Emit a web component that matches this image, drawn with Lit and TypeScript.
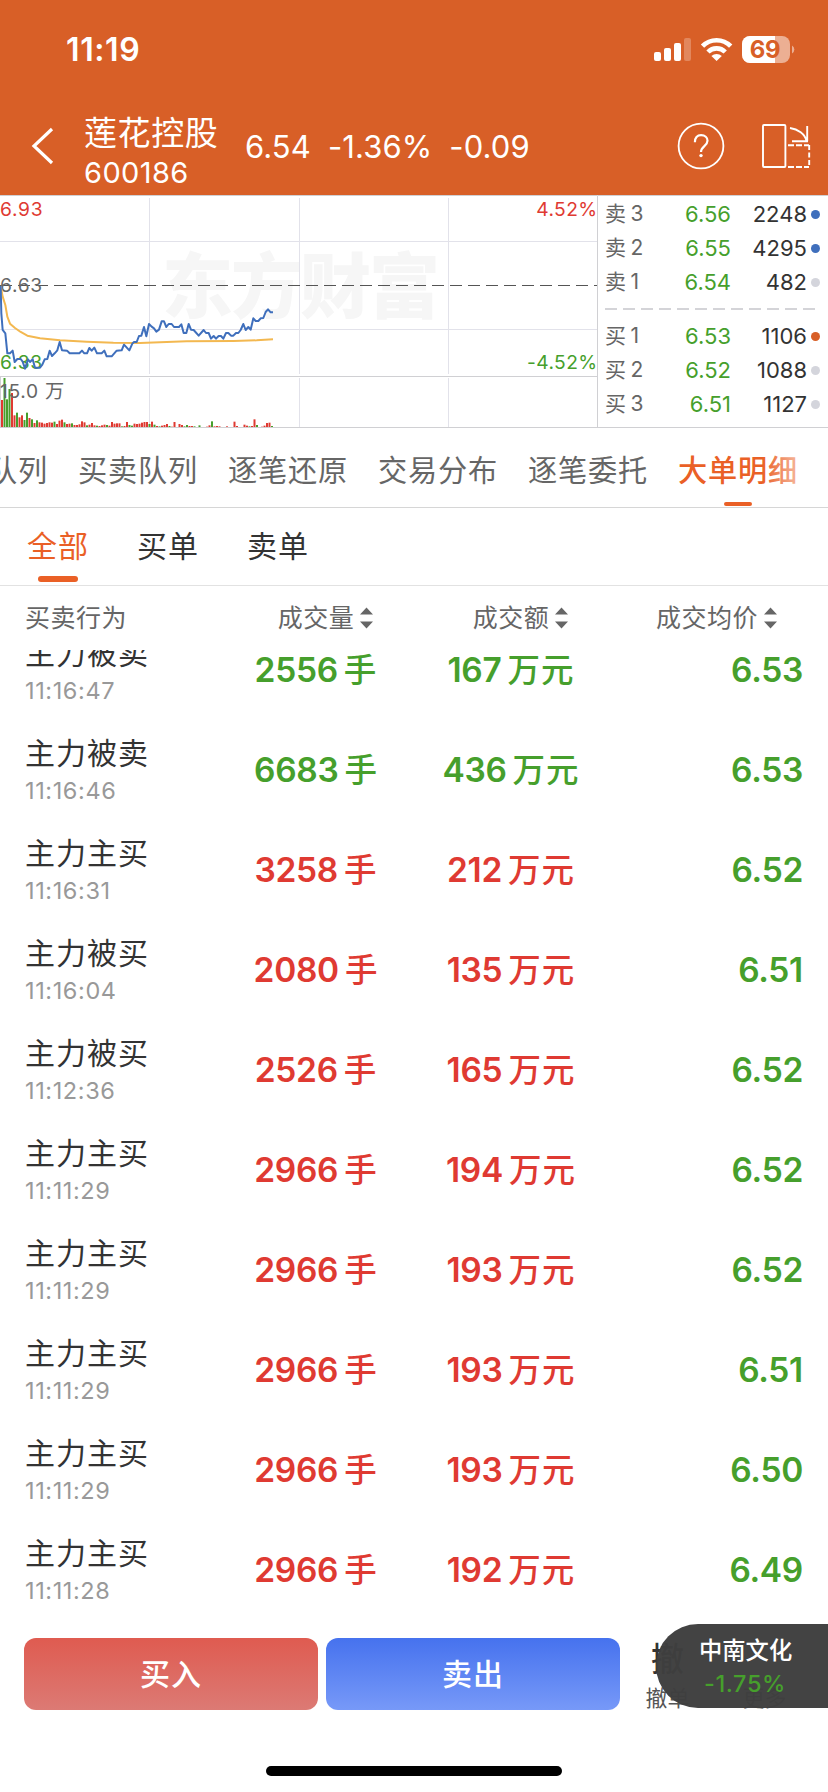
import { LitElement, html, svg, css } from "lit";
import { customElement } from "lit/decorators.js";
import { classMap } from "lit/directives/class-map.js";

const PRICE =
  "2,288 4,370 8,420 16,430 22,490 30,490 38,482 44,516 52,507 62,507 68,515 75,536 84,508 90,516 98,508 105,533 120,533 127,524 134,508 142,507 149,482 156,498 164,490 172,481 179,456 186,481 201,482 209,490 238,490 246,482 253,490 261,490 268,474 275,482 283,473 291,490 305,490 313,482 320,499 335,499 350,482 365,481 372,464 388,481 397,461 402,456 410,456 417,438 424,437 432,411 439,439 447,402 455,410 462,415 469,425 477,419 485,394 492,394 499,411 506,402 515,402 522,411 537,411 544,403 551,429 559,429 566,402 573,419 581,420 596,437 611,420 618,429 626,429 633,446 641,438 648,446 656,438 663,438 670,446 678,429 685,429 693,437 700,437 708,429 715,429 722,420 730,402 737,420 745,411 752,419 760,385 767,393 775,393 782,385 790,384 797,366 804,358 812,367 819,367";
const AVERAGE =
  "M2,288 L8,320 L16,345 L22,380 L30,401 L45,414 L62,426 L82,437 L120,445 L180,451 L260,455 L340,458 L420,459 L480,457 L560,454 L700,453 L770,451 L819,448";

/* Volume bars: height, prefixed by its direction (r = up, g = down). */
const VOLUME =
  "r81 g147 g83 g114 r102 r35 g43 r29 r35 g21 g43 r27 g23 r12 g20 r14 r13 r10 r12 r14 r13 g16 r9 r19 r22 g14 r9 r10 g11 r6 r6 r8 r17 r14 g5 r7 r12 r5 g4 r3 r5 r7 g6 r4 r15 r10 r11 r11 g2 r3 r15 g6 g4 r10 r9 r10 r13 r15 r15 g9 r16 g7 r3 g2 r4 r6 r9 g3 r1 r15 g0 r9 r6 g2 g6 r3 r3 g2 r0 g5 g0 r0 r1 r5 g17 r2 r3 r2 r0 r0 r2 r0 r0 r16 r3 g0 r0 r7 r4 g2 r3 r23 g6 r0 r1 r4 r12 r13 g3".split(" ");

type Quote = [string, string, string, string];
const ASKS: Quote[] = [
  ["卖 3", "6.56", "2248", "blue"],
  ["卖 2", "6.55", "4295", "blue"],
  ["卖 1", "6.54", "482", "grey"],
];
const BIDS: Quote[] = [
  ["买 1", "6.53", "1106", "orange"],
  ["买 2", "6.52", "1088", "grey"],
  ["买 3", "6.51", "1127", "grey"],
];

const TRADES: [string, string, string, string, string, boolean][] = [
  ["主力被卖", "11:16:47", "2556", "167", "6.53", false],
  ["主力被卖", "11:16:46", "6683", "436", "6.53", false],
  ["主力主买", "11:16:31", "3258", "212", "6.52", true],
  ["主力被买", "11:16:04", "2080", "135", "6.51", true],
  ["主力被买", "11:12:36", "2526", "165", "6.52", true],
  ["主力主买", "11:11:29", "2966", "194", "6.52", true],
  ["主力主买", "11:11:29", "2966", "193", "6.52", true],
  ["主力主买", "11:11:29", "2966", "193", "6.51", true],
  ["主力主买", "11:11:29", "2966", "193", "6.50", true],
  ["主力主买", "11:11:28", "2966", "192", "6.49", true],
];

const base = css`
  * { box-sizing: border-box; }
  :host { display: block; font-family: Inter, "Noto Sans CJK SC", sans-serif; white-space: nowrap; }
  svg { display: block; }
`;

@customElement("stock-header")
export class StockHeader extends LitElement {
  static styles = [base, css`
    :host { background: #d85f27; color: #fff; height: 195px; }
    .status { height: 100px; display: flex; justify-content: space-between; align-items: center; padding: 0 32px 0 66px; }
    .clock { font-size: 32px; font-weight: 600; line-height: 40px; letter-spacing: 0.6px; }
    .nav { height: 95px; display: flex; align-items: center; padding: 0 17px 3px 30px; }
    .back { margin-right: 29px; }
    .title { width: 161px; }
    .name { font-size: 33px; line-height: 38px; letter-spacing: 0.6px; margin-top: 14px; }
    .code { font-size: 29px; line-height: 41px; letter-spacing: 0.4px; }
    .quote { display: flex; gap: 17px; font-size: 31px; letter-spacing: 0.1px; flex: 1; }
    .help { margin-right: 36px; }
  `];
  render() {
    return html`
      <div class="status">
        <span class="clock">11:19</span>
        <svg width="143" height="30" viewBox="652 35 143 30">
          <g fill="#fff">
            <rect x="653" y="52" width="7" height="9" rx="2" />
            <rect x="663" y="48" width="7" height="13" rx="2" />
            <rect x="673" y="43" width="7" height="18" rx="2" />
            <rect x="683" y="38" width="7" height="23" rx="2" opacity=".25" />
          </g>
          <g fill="none" stroke="#fff" stroke-width="4.6">
            <path d="M701.5 46.2 A19.6 19.6 0 0 1 729.7 46.2" />
            <path d="M707 52 A12 12 0 0 1 724.2 52" />
          </g>
          <path d="M715.6 61 L710.4 56 A7.5 7.5 0 0 1 720.8 56 Z" fill="#fff" />
          <rect x="741" y="36" width="48" height="27" rx="8" fill="#fff" opacity=".5" />
          <path d="M749 36 H774 V63 H749 A8 8 0 0 1 741 55 V44 A8 8 0 0 1 749 36Z" fill="#fff" />
          <path d="M791 45.5 A4.6 4.6 0 0 1 791 53.5Z" fill="#fff" opacity=".5" />
          <text x="764" y="58" text-anchor="middle" font-size="24" font-weight="700" letter-spacing="-.4" fill="#d85f27">69</text>
        </svg>
      </div>
      <div class="nav">
        <svg class="back" width="25" height="40" viewBox="30 126 25 40"><path d="M52 129 L34 146 L52 163" fill="none" stroke="#fff" stroke-width="3.2" /></svg>
        <div class="title"><div class="name">莲花控股</div><div class="code">600186</div></div>
        <div class="quote"><span>6.54</span><span>-1.36%</span><span>-0.09</span></div>
        <svg class="help" width="48" height="48" viewBox="678 122 48 48">
          <circle cx="702" cy="146" r="22.4" fill="none" stroke="#fff" stroke-width="1.8" />
          <path d="M695.9 142.2 C695.7 137.6 698.3 135.1 702.1 135.1 C706 135.1 708.5 137.5 708.5 140.7 C708.5 146 702 146.2 702 152" fill="none" stroke="#fff" stroke-width="2.2" />
          <circle cx="702" cy="155.6" r="1.7" fill="#fff" />
        </svg>
        <svg width="50" height="46" viewBox="761 123 50 46">
          <g fill="none" stroke="#fff" stroke-width="1.9">
            <rect x="763" y="125" width="22.4" height="42" rx="1" />
            <path d="M788 145.2 H809" stroke-dasharray="6 2" />
            <path d="M788 167 H809" stroke-dasharray="6 2" />
            <path d="M809.2 145 V167" stroke-dasharray="5 2.5" />
            <path d="M790 128 C798 129 805 134 806.5 141 M807.2 126 V141.2 M792 141.2 H808" />
          </g>
        </svg>
      </div>
    `;
  }
}

@customElement("price-chart")
export class PriceChart extends LitElement {
  static styles = [base, css`
    .label { font-size: 19.2px; letter-spacing: 0.7px; }
    .up { fill: #df3a32; }
    .down { fill: #469f2c; }
    .flat { fill: #666; }
    .mark { font-family: "Noto Sans CJK SC", sans-serif; font-weight: 900; font-size: 71px; fill: #f6f6f6; }
    .grid { stroke: #e2e2ea; stroke-width: 1; fill: none; }
    .edge { stroke: #d0d0d3; stroke-width: 1; fill: none; }
    .end { text-anchor: end; letter-spacing: 0.4px; }
  `];
  render() {
    return html`
      <svg width="598" height="233" viewBox="0 195 598 233">
        <text class="mark" x="162" y="312" textLength="278">东方财富</text>
        <path class="grid" d="M0 241.5H597M0 329.5H597M149.5 198V374M299.5 198V374M448.5 198V374M149.5 378V427M299.5 378V427M448.5 378V427" />
        <path class="edge" d="M0 195.5H597.5V427M0 376.5H597M.5 377V427M0 427.5H598" />
        <path d="M0 285.5H597" stroke="#555" stroke-width="1.1" stroke-dasharray="12 6" />
        <g transform="translate(0 190) scale(.33333)">
          ${VOLUME.map((v, i) => svg`<rect class=${v[0] === "r" ? "up" : "down"} x=${3 + i * 7.5} y=${711 - +v.slice(1)} width="6" height=${+v.slice(1)} />`)}
        </g>
        <text class="label up" x="0" y="216">6.93</text>
        <text class="label flat" x="0" y="292">6.63</text>
        <text class="label down" x="0" y="369">6.33</text>
        <text class="label up end" x="597.5" y="216">4.52%</text>
        <text class="label down end" x="597.5" y="369">-4.52%</text>
        <text class="label flat" x="0" y="398">15.0 万</text>
        <g transform="translate(0 190) scale(.33333)" fill="none" stroke-linejoin="round">
          <path d=${AVERAGE} stroke="#f3b850" stroke-width="6" />
          <polyline points=${PRICE} stroke="#3f6fbc" stroke-width="6" />
        </g>
      </svg>
    `;
  }
}

@customElement("order-book")
export class OrderBook extends LitElement {
  static styles = [base, css`
    :host { flex: 1; height: 233px; padding: 1px 7px 0 7px; border-top: 1px solid #d0d0d3; border-bottom: 1px solid #d0d0d3; }
    .row { display: grid; grid-template-columns: 45px 81px 76px 13px; height: 34px; line-height: 34px; font-size: 22px; color: #333; }
    .side { color: #666; font-size: 21px; word-spacing: -1.5px; }
    .price { color: #469f2c; text-align: right; }
    .size { text-align: right; }
    .dot { width: 9px; height: 9px; border-radius: 50%; align-self: center; justify-self: end; background: #d4d5dc; }
    .blue { background: #3f6fbc; }
    .orange { background: #d85f27; }
    .gap { height: 20px; display: flex; align-items: center; }
  `];
  private row([side, price, size, tone]: Quote) {
    return html`<div class="row"><span class="side">${side}</span><span class="price">${price}</span><span class="size">${size}</span><i class="dot ${tone}"></i></div>`;
  }
  render() {
    return html`
      ${ASKS.map((q) => this.row(q))}
      <div class="gap"><svg width="211" height="2"><path d="M0 1H211" stroke="#d4d4d8" stroke-width="2" stroke-dasharray="12 6" /></svg></div>
      ${BIDS.map((q) => this.row(q))}
    `;
  }
}

@customElement("view-tabs")
export class ViewTabs extends LitElement {
  static styles = [base, css`
    .tabs { position: relative; height: 80px; border-bottom: 1px solid #d6d6d6; overflow: hidden; display: flex; color: #666; font-size: 29.2px; letter-spacing: 0.8px; }
    .track { display: flex; margin-left: -87px; }
    .tab { width: 150px; flex: none; text-align: center; line-height: 85px; display: flex; flex-direction: column; align-items: center; }
    .on { color: #ea6026; font-weight: 500; }
    .bar { width: 28px; height: 4px; border-radius: 2px; background: #ea6026; margin-top: -11px; }
    .fade { position: absolute; right: 0; top: 0; width: 66px; height: 74px; background: linear-gradient(90deg, rgba(255,255,255,0), rgba(255,255,255,.9) 90%, #fff); }
    .filters { height: 78px; border-bottom: 1px solid #e2e2e2; display: flex; gap: 48px; padding-left: 27px; font-size: 30px; letter-spacing: 1px; color: #333; }
    .filter { line-height: 76px; display: flex; flex-direction: column; align-items: center; }
    .chosen { color: #ea6026; }
    .under { width: 40px; height: 6px; border-radius: 3px; background: #ea6026; margin-top: -8px; }
  `];
  render() {
    const tabs = ["买卖队列", "买卖队列", "逐笔还原", "交易分布", "逐笔委托", "大单明细"];
    return html`
      <div class="tabs">
        <div class="track">${tabs.map((t, i) => html`<div class=${classMap({ tab: true, on: i === 5 })}>${t}${i === 5 ? html`<i class="bar"></i>` : ""}</div>`)}</div>
        <div class="fade"></div>
      </div>
      <div class="filters">
        ${["全部", "买单", "卖单"].map((t, i) => html`<div class=${classMap({ filter: true, chosen: i === 0 })}>${t}${i === 0 ? html`<i class="under"></i>` : ""}</div>`)}
      </div>
    `;
  }
}

@customElement("trade-list")
export class TradeList extends LitElement {
  static styles = [base, css`
    .head, .row { display: grid; grid-template-columns: 194px 194px 196px 1fr; padding: 0 25px 0 25px; }
    .head { height: 64px; line-height: 64px; font-size: 25px; letter-spacing: 0.5px; color: #666; }
    .sort { display: flex; align-items: center; justify-content: center; gap: 6px; padding-left: 19px; }
    .last { justify-content: flex-end; padding: 0 26px 0 0; }
    .list { overflow: hidden; height: 970px; }
    .rows { margin-top: -30px; }
    .row { height: 100px; align-items: center; font-size: 33.5px; font-weight: 600; letter-spacing: -0.3px; }
    .who { font-size: 30px; line-height: 40px; letter-spacing: 1px; color: #333; font-weight: 400; }
    .time { font-size: 23.5px; line-height: 35px; letter-spacing: 0.6px; color: #999; font-weight: 400; }
    .num { display: flex; align-items: center; justify-content: center; gap: 6px; }
    .unit { font-size: 32.5px; font-weight: 500; letter-spacing: 1px; margin-top: -5px; }
    .price { text-align: right; color: #469f2c; }
    .buy { color: #df3a32; }
    .sell { color: #469f2c; }
  `];
  private arrows = html`<svg width="13" height="22" viewBox="0 0 13 22"><path d="M0 7.5L6.5 .5L13 7.5ZM0 14.5L6.5 21.5L13 14.5Z" fill="#666" /></svg>`;
  render() {
    return html`
      <div class="head">
        <span>买卖行为</span>
        <span class="sort">成交量${this.arrows}</span>
        <span class="sort">成交额${this.arrows}</span>
        <span class="sort last">成交均价${this.arrows}</span>
      </div>
      <div class="list"><div class="rows">
        ${TRADES.map(([who, time, vol, amt, price, buy]) => {
          const tone = { num: true, buy, sell: !buy };
          return html`<div class="row">
            <div><div class="who">${who}</div><div class="time">${time}</div></div>
            <div class=${classMap(tone)}><span>${vol}</span><span class="unit">手</span></div>
            <div class=${classMap(tone)}><span>${amt}</span><span class="unit">万元</span></div>
            <div class="price">${price}</div>
          </div>`;
        })}
      </div></div>
    `;
  }
}

@customElement("trade-bar")
export class TradeBar extends LitElement {
  static styles = [base, css`
    :host { position: relative; height: 172px; overflow: hidden; }
    .actions { display: flex; padding: 18px 0 0 24px; gap: 8px; height: 146px; }
    .btn { width: 294px; height: 72px; border-radius: 12px; color: #fff; font-size: 30px; font-weight: 500; letter-spacing: 1px; line-height: 72px; text-align: center; }
    .buy { background: linear-gradient(#df5b50, #dc7a74); }
    .sell { background: linear-gradient(#4672ee, #7799f8); }
    .more { display: flex; padding-left: 17px; gap: 52px; }
    .item { width: 45px; display: flex; flex-direction: column; align-items: center; font-size: 22px; color: #555; line-height: 28px; }
    .glyph { font-size: 33px; font-weight: 500; line-height: 42px; height: 46px; color: #333; }
    .float { position: absolute; left: 656px; top: 4px; width: 214px; height: 84px; border-radius: 42px; background: rgba(62, 62, 62, .975); color: #fff; padding: 9px 0 0 43px; font-size: 23.3px; font-weight: 500; line-height: 35px; }
    .pct { color: #469f2c; font-size: 23.5px; line-height: 32px; padding-left: 5px; letter-spacing: 0.6px; }
    .home { width: 296px; height: 10px; border-radius: 5px; background: #000; margin: 0 auto; }
  `];
  render() {
    return html`
      <div class="actions">
        <div class="btn buy">买入</div>
        <div class="btn sell">卖出</div>
        <div class="more">
          <div class="item"><span class="glyph">撤</span><span>撤单</span></div>
          <div class="item"><span class="glyph"></span><span>更多</span></div>
        </div>
      </div>
      <div class="home"></div>
      <div class="float"><div>中南文化</div><div class="pct">-1.75%</div></div>
    `;
  }
}

@customElement("app-root")
export class AppRoot extends LitElement {
  static styles = [base, css`
    :host { width: 828px; height: 1792px; background: #fff; overflow: hidden; }
    .market { display: flex; }
  `];
  render() {
    return html`
      <stock-header></stock-header>
      <div class="market"><price-chart></price-chart><order-book></order-book></div>
      <view-tabs></view-tabs>
      <trade-list></trade-list>
      <trade-bar></trade-bar>
    `;
  }
}
